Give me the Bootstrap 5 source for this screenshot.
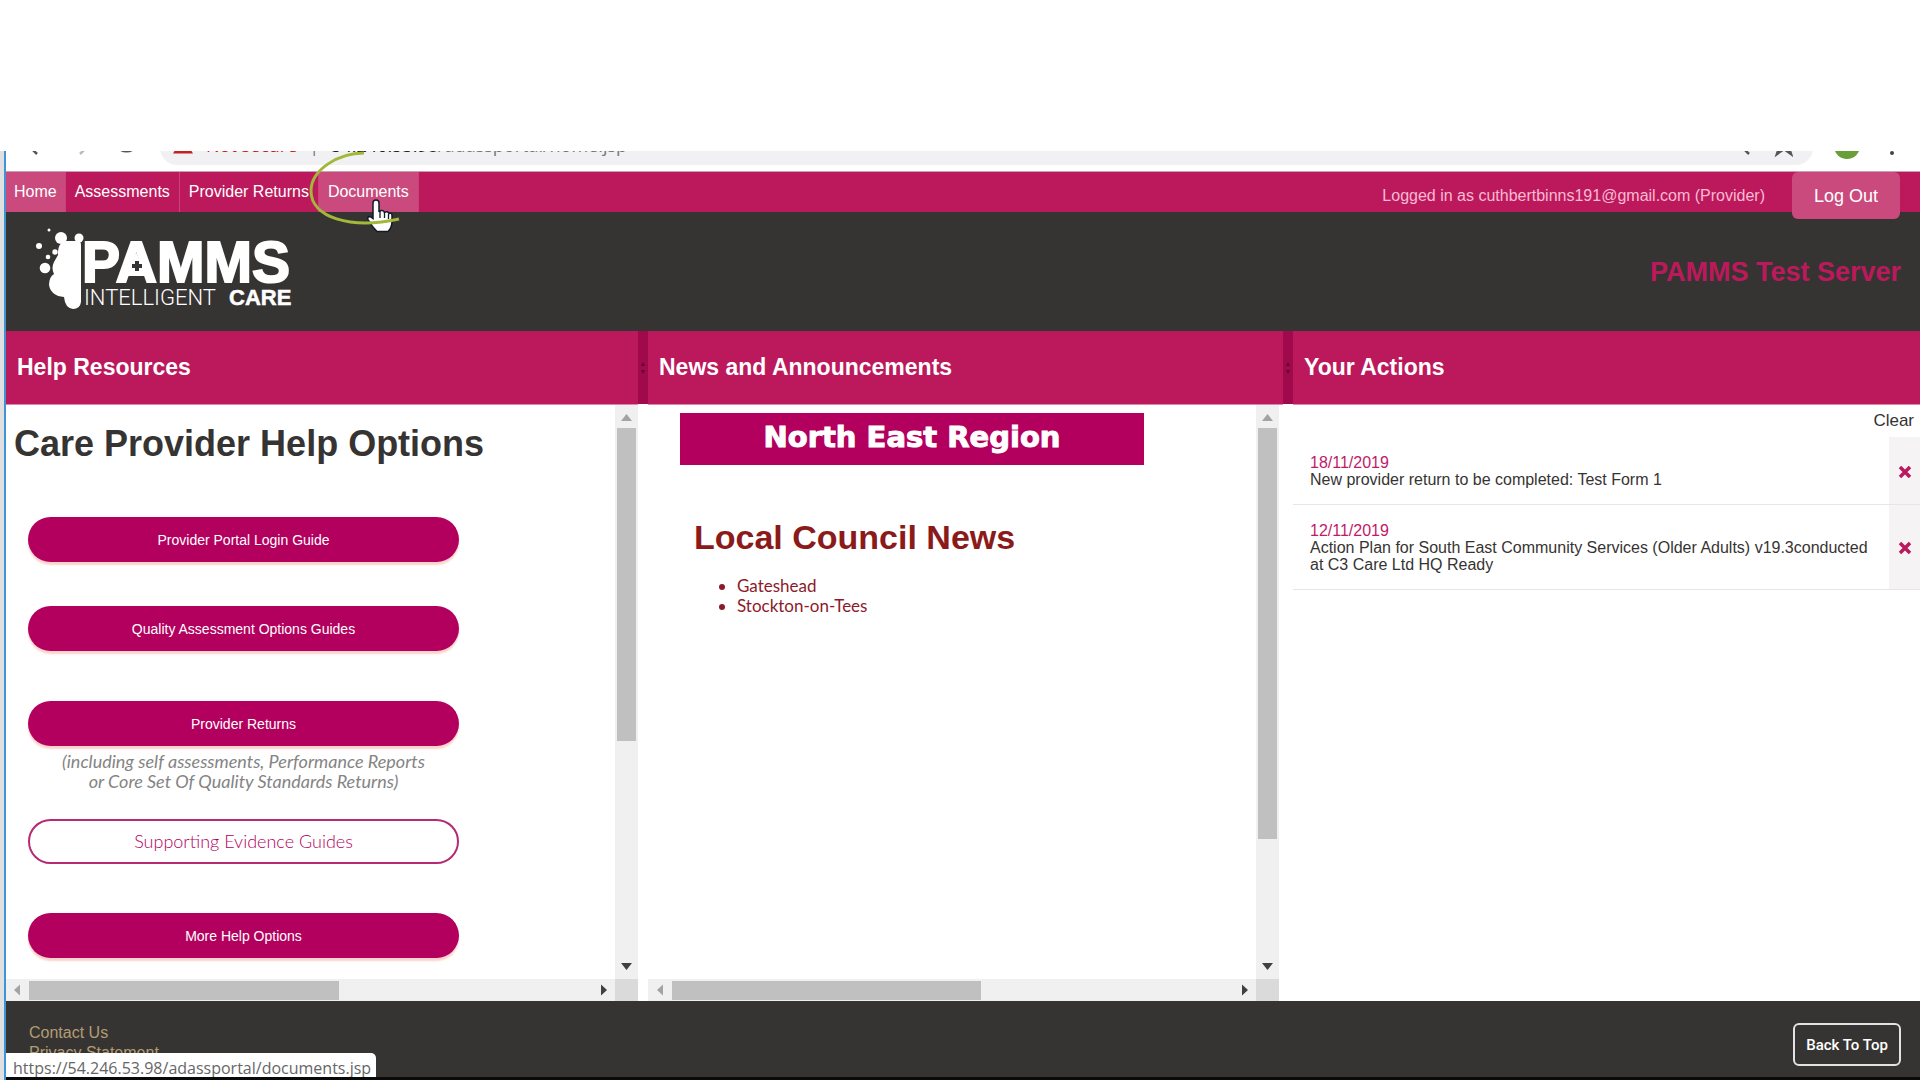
<!DOCTYPE html>
<html lang="en">
<head>
<meta charset="utf-8">
<meta name="viewport" content="width=device-width, initial-scale=1">
<title>PAMMS Test Server</title>
<link href="https://cdn.jsdelivr.net/npm/bootstrap@5.3.0/dist/css/bootstrap.min.css" rel="stylesheet">
<style>
:root { --pink: #bc195c; --pink-light: #ca4a7d; --btn: #b3005e; --ink: #363432; }
body { font: 16px/20px "Liberation Sans", Arial, sans-serif; color: #363432; background: #fff; overflow: hidden; }
a { text-decoration: none; }
.frame { min-height: 100vh; padding-top: 151px; }
.edge { flex: none; width: 6px; background: #e0e0e0; border-right: 2px solid #3f94d8; }
.app { min-width: 0; }

/* browser strip, only its lower part is visible */
.chrome { height: 21px; overflow: hidden; border-bottom: 1px solid #c9a0b2; }
.chrome svg { flex: none; }
.omni { height: 34px; margin-top: -20px; border-radius: 17px; background: #f1f1f3; padding: 0 20px 0 13px; font: 18px/29px "Open Sans", sans-serif; color: #777; }
.omni .danger { color: #c5221f; }
.omni .host { color: #222; }

.topnav { height: 40px; background: var(--pink); }
.topnav .tab { color: #fff; padding: 0 9px; line-height: 40px; border-right: 1px solid #cb4278; }
.topnav .tab:first-child { padding: 0 8px; }
.topnav .tab.on { background: var(--pink-light); }
.who { color: #fbb9d3; line-height: 47px; margin-right: 27px; }
.logout { height: 47px; width: 108px; background: var(--pink-light); color: #fff; border: 0; border-radius: 6px; font-size: 18px; margin-right: 20px; }

.brandbar { height: 119px; background: var(--ink); padding: 0 19px 0 27px; }
.server { color: var(--pink); font: bold 27px/30px "Liberation Sans", Arial, sans-serif; }
.logo-big { font: bold 57px "Liberation Sans", Arial, sans-serif; }
.logo-thin { font: 300 22px Roboto, sans-serif; }
.logo-bold { font: bold 22px "Liberation Sans", Arial, sans-serif; }

.cols { display: grid; grid-template-columns: 632fr 10px 635fr 10px 627fr; flex: 1 1 auto; }
.pane { display: grid; grid-template-rows: 74px 1fr; min-width: 0; }
.pane > h2 { margin: 0; padding: 0 11px; background: var(--pink); color: #fff; font: bold 23px/72px "Liberation Sans", Arial, sans-serif; border-bottom: 1px solid #df86aa; }
.grip { height: 73px; background: #a00a4c; }

.scroller { display: grid; grid-template-columns: 1fr 23px; grid-template-rows: 1fr 22px; }
.vbar, .hbar { display: flex; align-items: center; background: #f0f0f0; }
.vbar { flex-direction: column; }
.corner { background: #dadada; }
.track { flex: 1 1 auto; }
.vbar .track { width: 19px; }
.hbar .track { height: 19px; }
.thumb { background: #c0c0c0; }
.vbar svg, .hbar svg { flex: none; }

.help { padding: 16px 0 0 8px; }
.help h1 { font: bold 36px/46px "Liberation Sans", Arial, sans-serif; margin: 0 0 50px; }
.stack { width: 431px; margin-left: 14px; }
.pill { height: 45px; width: 100%; border-radius: 23px; border: 0; background: var(--btn); color: #fff; font-size: 14px; box-shadow: 0 3px 2px #fbd3cb; }
.pill.hollow { background: #fff; color: var(--btn); border: 2px solid #b52a72; box-shadow: none; font: 300 18px/20px Lato, sans-serif; padding: 0 0 2px; }
.gap-a { margin-bottom: 44px; }
.gap-b { margin-bottom: 50px; }
.gap-c { margin-bottom: 49px; }
.hint { font: italic 18px/20px Lato, sans-serif; color: #848484; margin: 5px -10px 28px; }

.news { padding: 8px 0 0 32px; }
.banner { width: 464px; height: 52px; background: var(--btn); color: #fff; font: bold 29px/48px "DejaVu Sans", sans-serif; -webkit-text-stroke: 1px #fff; }
.news h3 { font: bold 34px/40px "Liberation Sans", Arial, sans-serif; color: #8b1a1a; margin: 52px 0 19px 14px; }
.news ul { font: 17px/20px Lato, sans-serif; color: #8b1a2a; padding-left: 57px; margin: 0; }

.clearlink { color: #333; font-size: 17px; line-height: 32px; padding-right: 6px; }
.act { border-bottom: 1px solid #e6e6e6; line-height: 17px; }
.act .txt { padding: 17px 8px 16px 17px; }
.act .day { color: #c01a68; }
.act button { width: 31px; border: 0; background: #f5f3f4; padding: 0; flex: none; }

.foot { height: 76px; background: var(--ink); padding: 22px 19px 0 23px; }
.foot a { color: #b39c72; line-height: 20px; }
.totop { width: 108px; height: 43px; background: transparent; color: #fff; border: 2px solid #e2e2e2; border-radius: 6px; font: 500 15px/20px Roboto, sans-serif; padding: 0; }
.taskedge { height: 3px; background: #0a0a0a; }
.status { left: 6px; bottom: 3px; width: 370px; height: 24px; background: #fff; border-radius: 0 5px 0 0; color: #666; font: 16px/30px "Open Sans", sans-serif; padding-left: 7px; overflow: hidden; }
.pointer { left: 300px; top: 145px; z-index: 5; pointer-events: none; }
</style>
<script src="https://cdn.jsdelivr.net/npm/bootstrap@5.3.0/dist/js/bootstrap.bundle.min.js"></script>
</head>
<body>
<div class="frame d-flex position-relative">
  <div class="edge"></div>
  <div class="app d-flex flex-column flex-grow-1">

    <div class="chrome d-flex">
      <svg width="154" height="20" viewBox="0 0 154 20" fill="none" stroke="#555" stroke-width="2.5"><path d="M26-2l5 5"/><path d="M74 3l5-5" stroke="#bbb"/><path d="M112-5a9 8 0 0 0 17 0"/></svg>
      <div class="omni d-flex flex-grow-1">
        <svg width="33" height="34" viewBox="0 0 33 34"><path d="M0 22.500h20L10 6z" fill="#c5221f"/></svg>
        <span class="danger">Not secure</span><span class="px-2 mx-1">|</span><span><span class="host">54.246.53.98</span>/adassportal/home.jsp</span>
        <svg class="ms-auto" width="52" height="34" viewBox="0 0 52 34" fill="none" stroke="#555" stroke-width="2.500"><circle cx="5" cy="13" r="5"/><path d="M8 17l6 6M42 23l3-9-6-4h7l3-7 3 7h7l-6 4 3 9-7-5z" transform="translate(-6 0)"/></svg>
      </div>
      <svg width="107" height="20" viewBox="0 0 107 20"><circle cx="34" cy="-5" r="13" fill="#689f38"/><circle cx="79" cy="2" r="2" fill="#444"/></svg>
    </div>

    <nav class="topnav d-flex" aria-label="Main">
      <a class="tab on" href="#">Home</a><a class="tab" href="#">Assessments</a><a class="tab" href="#">Provider Returns</a><a class="tab on" href="#">Documents</a>
      <span class="who ms-auto">Logged in as cuthbertbinns191@gmail.com (Provider)</span>
      <button class="logout position-relative z-1" type="button">Log Out</button>
    </nav>

    <header class="brandbar d-flex justify-content-between align-items-center">
      <svg width="264" height="95" viewBox="0 0 264 95" role="img" aria-label="PAMMS Intelligent Care" fill="#fff">
        <path d="M33 17H45Q48 17 48 21V78Q47 85 40 85Q32 84 31 73Q18 72 16 61Q16 53 21 50Q18 44 21 38L25 31Q24 19 33 17Z"/>
        <circle cx="28" cy="14" r="6"/><circle cx="46" cy="14" r="4.500"/><circle cx="16" cy="6" r="1.500"/><circle cx="6" cy="22" r="3"/><circle cx="22" cy="28" r="2.700"/><circle cx="15" cy="33" r="2.300"/><circle cx="12" cy="44" r="5.300"/>
        <text class="logo-big" x="49" y="58" stroke="#fff" stroke-width="2">PAMMS</text>
        <path d="M103 28L94 52H114Z"/>
        <path d="M102 37h4v3h3v4h-3v3h-4v-3h-3v-4h3z" fill="#363432"/>
        <text class="logo-thin" x="51" y="81">INTELLIGENT</text>
        <text class="logo-bold" x="196" y="81" stroke="#fff" stroke-width=".5">CARE</text>
      </svg>
      <div class="server">PAMMS Test Server</div>
    </header>

    <main class="cols">
      <section class="pane">
        <h2>Help Resources</h2>
        <div class="scroller">
          <div class="help">
            <h1>Care Provider Help Options</h1>
            <div class="stack d-flex flex-column text-center">
              <button class="pill gap-a" type="button">Provider Portal Login Guide</button>
              <button class="pill gap-b" type="button">Quality Assessment Options Guides</button>
              <button class="pill" type="button">Provider Returns</button>
              <p class="hint">(including self assessments, Performance Reports<br>or Core Set Of Quality Standards Returns)</p>
              <button class="pill hollow gap-c" type="button">Supporting Evidence Guides</button>
              <button class="pill" type="button">More Help Options</button>
            </div>
          </div>
          <div class="vbar">
            <svg width="23" height="23" viewBox="0 0 23 23"><path d="M6 16l5.500-7 5.500 7z" fill="#a3a3a3"/></svg>
            <div class="track"><div class="thumb" style="height:59.300%"></div></div>
            <svg width="23" height="23" viewBox="0 0 23 23"><path d="M6 7l5.500 7 5.500-7z" fill="#404040"/></svg>
          </div>
          <div class="hbar">
            <svg width="23" height="22" viewBox="0 0 23 22"><path d="M14 5.500L8 11l6 5.500z" fill="#a3a3a3"/></svg>
            <div class="track"><div class="thumb h-100" style="width:55%"></div></div>
            <svg width="23" height="22" viewBox="0 0 23 22"><path d="M9 5.500l6 5.500-6 5.500z" fill="#404040"/></svg>
          </div>
          <div class="corner"></div>
        </div>
      </section>

      <div class="grip"><svg width="10" height="73" viewBox="0 0 10 73" fill="#5d0830"><path d="M3 35l2-4 2 4zM3 39l2 4 2-4z"/></svg></div>

      <section class="pane">
        <h2>News and Announcements</h2>
        <div class="scroller me-1">
          <div class="news">
            <div class="banner text-center">North East Region</div>
            <h3>Local Council News</h3>
            <ul><li>Gateshead</li><li>Stockton-on-Tees</li></ul>
          </div>
          <div class="vbar">
            <svg width="23" height="23" viewBox="0 0 23 23"><path d="M6 16l5.500-7 5.500 7z" fill="#a3a3a3"/></svg>
            <div class="track"><div class="thumb" style="height:77.800%"></div></div>
            <svg width="23" height="23" viewBox="0 0 23 23"><path d="M6 7l5.500 7 5.500-7z" fill="#404040"/></svg>
          </div>
          <div class="hbar">
            <svg width="24" height="22" viewBox="0 0 24 22"><path d="M15 5.500L9 11l6 5.500z" fill="#a3a3a3"/></svg>
            <div class="track"><div class="thumb h-100" style="width:55%"></div></div>
            <svg width="23" height="22" viewBox="0 0 23 22"><path d="M9 5.500l6 5.500-6 5.500z" fill="#404040"/></svg>
          </div>
          <div class="corner"></div>
        </div>
      </section>

      <div class="grip"><svg width="10" height="73" viewBox="0 0 10 73" fill="#5d0830"><path d="M3 35l2-4 2 4zM3 39l2 4 2-4z"/></svg></div>

      <section class="pane">
        <h2>Your Actions</h2>
        <div>
          <div class="d-flex justify-content-end"><a class="clearlink" href="#">Clear</a></div>
          <div class="act d-flex">
            <div class="txt flex-grow-1"><div class="day">18/11/2019</div>New provider return to be completed: Test Form 1</div>
            <button type="button" aria-label="Clear action"><svg width="14" height="14" viewBox="0 0 14 14" stroke="#bc195c" stroke-width="3.500"><path d="M2 2l10 10M12 2L2 12"/></svg></button>
          </div>
          <div class="act d-flex">
            <div class="txt flex-grow-1"><div class="day">12/11/2019</div>Action Plan for South East Community Services (Older Adults) v19.3conducted at C3 Care Ltd HQ Ready</div>
            <button type="button" aria-label="Clear action"><svg width="14" height="14" viewBox="0 0 14 14" stroke="#bc195c" stroke-width="3.500"><path d="M2 2l10 10M12 2L2 12"/></svg></button>
          </div>
        </div>
      </section>
    </main>

    <footer class="foot d-flex justify-content-between align-items-start">
      <div class="d-flex flex-column"><a href="#">Contact Us</a><a href="#">Privacy Statement</a></div>
      <button class="totop" type="button">Back To Top</button>
    </footer>
    <div class="taskedge"></div>
  </div>

  <div class="status position-absolute">https://54.246.53.98/adassportal/documents.jsp</div>
  <svg class="pointer position-absolute" width="110" height="92" viewBox="300 145 110 92" aria-hidden="true">
    <path d="M373 203q0-3 3-3t3 3v9q1-2 3-1.500 2 0 2.500 2 3-2 4.500 1 3-1 3 2v6q0 6-4 10h-11q-5-5-9-12-1-3 2-3l3 2z" fill="#fff" stroke="#111827" stroke-width="1.500"/>
    <path d="M380 211v7M384.500 212v6M388.500 214v5" stroke="#111827" stroke-width="1.300"/>
    <path d="M364 153C338 153 311 170 311 191C311 217 350 230 399 219" fill="none" stroke="#a2b83a" stroke-width="3"/>
  </svg>
</div>
</body>
</html>
